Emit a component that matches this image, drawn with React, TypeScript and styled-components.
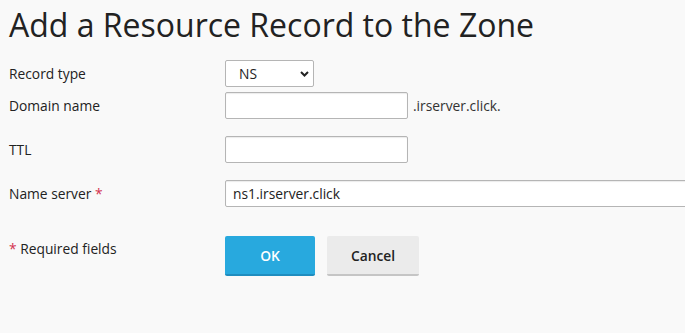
import styled, { createGlobalStyle } from 'styled-components'

const GlobalStyle = createGlobalStyle`
  html, body {
    margin: 0;
    padding: 0;
    background: #f9f9f9;
  }
  body {
    font-family: 'Open Sans', 'Liberation Sans', sans-serif;
    color: #222;
    overflow: hidden;
  }
`

const Page = styled.div`
  width: 685px;
  height: 333px;
  padding: 0 0 0 9px;
  box-sizing: border-box;
`

const Title = styled.h1`
  margin: 0;
  padding-top: 5px;
  font-size: 32px;
  font-weight: 400;
  line-height: 40px;
  color: #222;
`

const Form = styled.form`
  margin-top: 15px;
`

const Row = styled.div<{ $gap: number; $top?: boolean }>`
  display: grid;
  grid-template-columns: 216px 1fr;
  align-items: ${(p) => (p.$top ? 'start' : 'center')};
  margin-top: ${(p) => p.$gap}px;
`

const Label = styled.label<{ $pad?: number }>`
  font-size: 13.8px;
  color: #222;
  padding-top: ${(p) => p.$pad ?? 0}px;
`

const Req = styled.span`
  color: #d3324e;
`

const Field = styled.div`
  display: flex;
  align-items: center;
  gap: 5px;
  font-size: 13.8px;
  color: #333;
`

const Input = styled.input<{ $wide?: boolean }>`
  box-sizing: border-box;
  width: ${(p) => (p.$wide ? '470px' : '183px')};
  height: 27px;
  padding: 0 7px;
  border: 1px solid #b5b5b5;
  border-radius: 2px;
  background: #fff;
  box-shadow: inset 0 1px 1px rgba(0, 0, 0, 0.08);
  font-family: 'Open Sans', 'Liberation Sans', sans-serif;
  font-size: 13.8px;
  color: #222;
  outline: none;
`

const SelectWrap = styled.div`
  position: relative;
  width: 89px;
  height: 27px;
`

const Select = styled.select`
  appearance: none;
  box-sizing: border-box;
  width: 100%;
  height: 100%;
  padding: 0 0 0 13px;
  border: 1px solid #b5b5b5;
  border-radius: 2px;
  background: #fff;
  font-family: 'Open Sans', 'Liberation Sans', sans-serif;
  font-size: 13.8px;
  color: #222;
  outline: none;
`

const Chevron = styled.svg`
  position: absolute;
  right: 5px;
  top: 11px;
  pointer-events: none;
`

const Buttons = styled.div`
  display: flex;
  gap: 12px;
`

const Button = styled.button<{ $primary?: boolean }>`
  box-sizing: border-box;
  width: ${(p) => (p.$primary ? '90px' : '92px')};
  height: 40px;
  border: none;
  border-bottom: 2px solid ${(p) => (p.$primary ? '#1f8dbf' : '#c5c5c5')};
  border-radius: 2px;
  background: ${(p) => (p.$primary ? '#28a9de' : '#ebebeb')};
  color: ${(p) => (p.$primary ? '#fff' : '#222')};
  font-family: 'Open Sans', 'Liberation Sans', sans-serif;
  font-size: 13.8px;
  font-weight: 600;
  padding: 1px 0 0;
`

export default function App() {
  return (
    <>
      <GlobalStyle />
      <Page>
        <Title>Add a Resource Record to the Zone</Title>
        <Form>
          <Row $gap={0}>
            <Label>Record type</Label>
            <SelectWrap>
              <Select defaultValue="NS">
                <option value="NS">NS</option>
              </Select>
              <Chevron width="9" height="6" viewBox="0 0 9 6">
                <path d="M1 1l3.5 3.5L8 1" fill="none" stroke="#222" strokeWidth="2" />
              </Chevron>
            </SelectWrap>
          </Row>
          <Row $gap={5}>
            <Label>Domain name</Label>
            <Field>
              <Input />
              <span>.irserver.click.</span>
            </Field>
          </Row>
          <Row $gap={17}>
            <Label>TTL</Label>
            <Field>
              <Input />
            </Field>
          </Row>
          <Row $gap={17}>
            <Label>
              Name server <Req>*</Req>
            </Label>
            <Field>
              <Input $wide defaultValue="ns1.irserver.click" />
            </Field>
          </Row>
          <Row $gap={29} $top>
            <Label $pad={3}>
              <Req>*</Req> Required fields
            </Label>
            <Buttons>
              <Button $primary type="button">
                OK
              </Button>
              <Button type="button">Cancel</Button>
            </Buttons>
          </Row>
        </Form>
      </Page>
    </>
  )
}
